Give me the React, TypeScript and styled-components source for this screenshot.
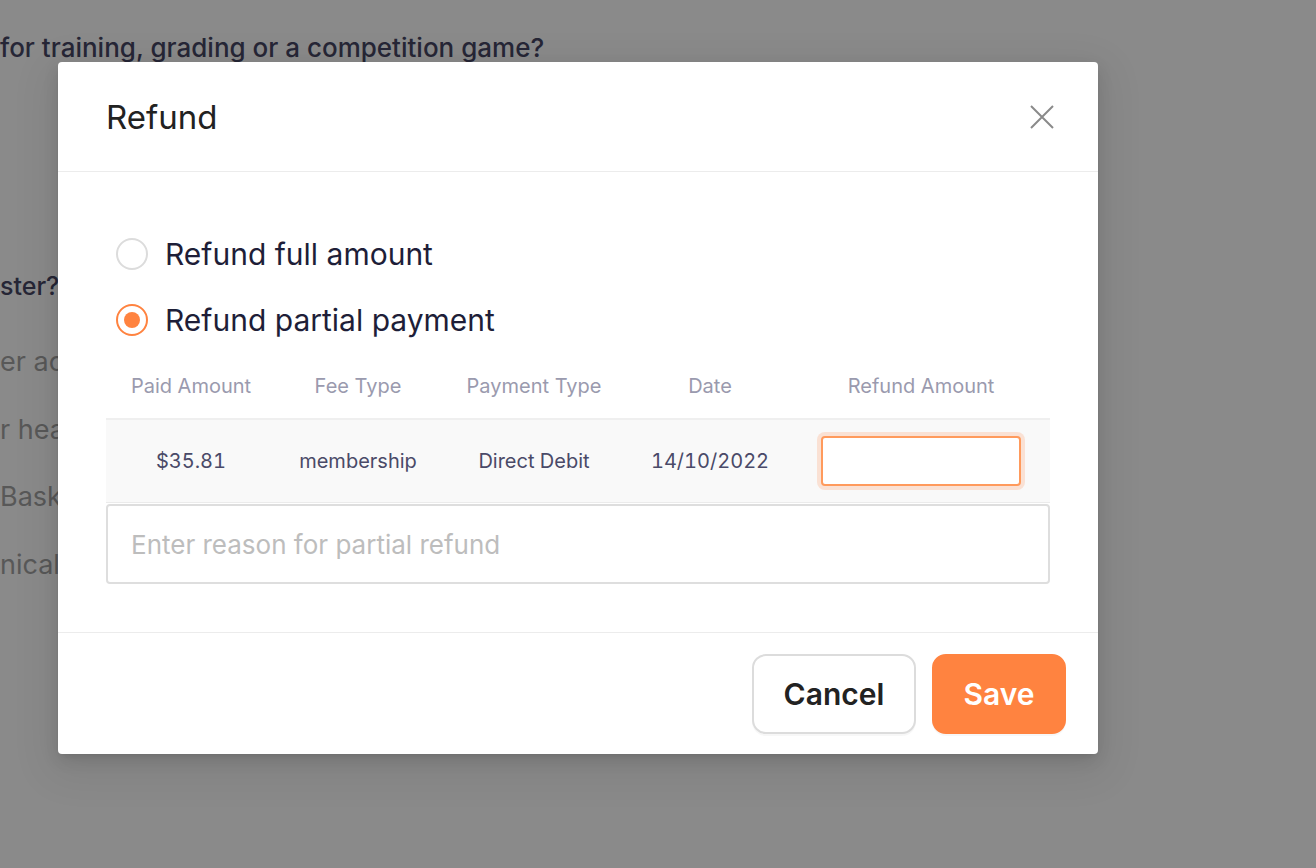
import React from "react";
import styled, { createGlobalStyle } from "styled-components";

const GlobalStyle = createGlobalStyle`
  html, body { margin: 0; padding: 0; }
  body {
    font-family: Inter, "Noto Sans", "Liberation Sans", sans-serif;
    background: #8a8a8a;
  }
  * { box-sizing: border-box; }
`;

const Page = styled.div`
  position: relative;
  width: 1316px;
  height: 868px;
  overflow: hidden;
  background: #8a8a8a;
`;

const Behind = styled.div`
  display: flex;
  flex-direction: column;
  padding-top: 34px;
`;

const BgLine = styled.div<{ $top: number; $tone: "dark" | "light"; $size: number }>`
  margin-top: ${(p) => p.$top}px;
  font-size: ${(p) => p.$size}px;
  line-height: 28px;
  font-weight: ${(p) => (p.$tone === "dark" ? 500 : 400)};
  color: ${(p) => (p.$tone === "dark" ? "#262636" : "#585858")};
  white-space: nowrap;
`;

const Modal = styled.div`
  position: absolute;
  left: 58px;
  top: 62px;
  width: 1040px;
  background: #fff;
  border-radius: 4px;
  box-shadow: 0 6px 16px 0 rgba(0, 0, 0, 0.1), 0 3px 6px -4px rgba(0, 0, 0, 0.14),
    0 12px 40px 10px rgba(0, 0, 0, 0.07);
  display: flex;
  flex-direction: column;
`;

const Header = styled.div`
  height: 110px;
  display: flex;
  align-items: center;
  justify-content: space-between;
  padding: 0 44px 0 48px;
  border-bottom: 1px solid #ececec;
`;

const Title = styled.div`
  font-size: 33px;
  color: #222;
  font-weight: 400;
`;

const CloseButton = styled.button`
  border: 0;
  background: none;
  padding: 0;
  width: 24px;
  height: 24px;
  display: flex;
  align-items: center;
  justify-content: center;
  cursor: pointer;
`;

const Body = styled.div`
  padding: 62px 48px 48px;
  display: flex;
  flex-direction: column;
`;

const RadioGroup = styled.div`
  display: flex;
  flex-direction: column;
  gap: 26px;
`;

const RadioRow = styled.label`
  display: flex;
  align-items: center;
  height: 40px;
  gap: 17px;
  padding-left: 10px;
  cursor: pointer;
`;

const RadioCircle = styled.span<{ $checked: boolean }>`
  width: 32px;
  height: 32px;
  border-radius: 50%;
  border: 2px solid ${(p) => (p.$checked ? "#ff8340" : "#dcdcdc")};
  display: flex;
  align-items: center;
  justify-content: center;
  flex-shrink: 0;
  &::after {
    content: "";
    width: 16px;
    height: 16px;
    border-radius: 50%;
    background: #ff8340;
    display: ${(p) => (p.$checked ? "block" : "none")};
  }
`;

const RadioLabel = styled.span`
  font-size: 30px;
  color: #1e1e38;
  line-height: 40px;
`;

const TableGrid = styled.div`
  display: grid;
  grid-template-columns: 170px 164px 188px 164px 258px;
  margin-top: 20px;
`;

const HeadCell = styled.div`
  display: flex;
  justify-content: center;
  align-items: center;
  padding: 14px 0 20px;
  line-height: 24px;
  font-size: 20px;
  color: #9a9aae;
  border-bottom: 2px solid #efefef;
`;

const DataCell = styled.div`
  display: flex;
  justify-content: center;
  align-items: center;
  height: 83px;
  background: #f9f9f9;
  font-size: 20px;
  font-variant-numeric: tabular-nums;
  color: #4a4a68;
  border-bottom: 1px solid #ebebeb;
`;

const AmountInput = styled.input`
  width: 200px;
  height: 50px;
  border: 2px solid #ff9a5c;
  border-radius: 4px;
  box-shadow: 0 0 0 4px rgba(255, 131, 64, 0.2);
  outline: none;
  background: #fff;
  font-family: inherit;
  font-size: 20px;
  padding: 0 12px;
`;

const ReasonInput = styled.input`
  margin-top: 1px;
  width: 100%;
  height: 80px;
  border: 2px solid #dedede;
  border-radius: 4px;
  padding: 0 23px;
  font-family: inherit;
  font-size: 26px;
  color: #333;
  outline: none;
  &::placeholder {
    color: #bdbdbd;
  }
`;

const Footer = styled.div`
  border-top: 1px solid #ececec;
  padding: 21px 32px 20px;
  display: flex;
  justify-content: flex-end;
  gap: 16px;
`;

const Button = styled.button<{ $primary?: boolean; $w: number }>`
  width: ${(p) => p.$w}px;
  height: 80px;
  border-radius: 14px;
  font-family: inherit;
  font-size: 30px;
  font-weight: 600;
  cursor: pointer;
  border: 2px solid ${(p) => (p.$primary ? "#ff8340" : "#dcdcdc")};
  background: ${(p) => (p.$primary ? "#ff8340" : "#fff")};
  color: ${(p) => (p.$primary ? "#fff" : "#222")};
  box-shadow: 0 2px 0 rgba(0, 0, 0, 0.03);
`;

export default function App() {
  const [mode, setMode] = React.useState<"full" | "partial">("partial");
  const cols = ["Paid Amount", "Fee Type", "Payment Type", "Date", "Refund Amount"];
  const row = ["$35.81", "membership", "Direct Debit", "14/10/2022"];
  return (
    <>
      <GlobalStyle />
      <Page>
        <Behind>
          <BgLine $top={0} $tone="dark" $size={26}>
            for training, grading or a competition game?
          </BgLine>
          <BgLine $top={210} $tone="dark" $size={25}>
            ster?
          </BgLine>
          <BgLine $top={48} $tone="light" $size={27}>
            er account
          </BgLine>
          <BgLine $top={40} $tone="light" $size={27}>
            r health
          </BgLine>
          <BgLine $top={39} $tone="light" $size={27}>
            Basketball
          </BgLine>
          <BgLine $top={40} $tone="light" $size={27}>
            nical
          </BgLine>
        </Behind>
        <Modal>
          <Header>
            <Title>Refund</Title>
            <CloseButton aria-label="Close">
              <svg width="24" height="24" viewBox="0 0 24 24">
                <path d="M1 1 L23 23 M23 1 L1 23" stroke="#8a8a8a" strokeWidth="2" fill="none" />
              </svg>
            </CloseButton>
          </Header>
          <Body>
            <RadioGroup>
              <RadioRow onClick={() => setMode("full")}>
                <RadioCircle $checked={mode === "full"} />
                <RadioLabel>Refund full amount</RadioLabel>
              </RadioRow>
              <RadioRow onClick={() => setMode("partial")}>
                <RadioCircle $checked={mode === "partial"} />
                <RadioLabel>Refund partial payment</RadioLabel>
              </RadioRow>
            </RadioGroup>
            <TableGrid>
              {cols.map((c) => (
                <HeadCell key={c}>{c}</HeadCell>
              ))}
              {row.map((c) => (
                <DataCell key={c}>{c}</DataCell>
              ))}
              <DataCell>
                <AmountInput />
              </DataCell>
            </TableGrid>
            <ReasonInput placeholder="Enter reason for partial refund" />
          </Body>
          <Footer>
            <Button $w={164}>Cancel</Button>
            <Button $w={134} $primary>
              Save
            </Button>
          </Footer>
        </Modal>
      </Page>
    </>
  );
}
